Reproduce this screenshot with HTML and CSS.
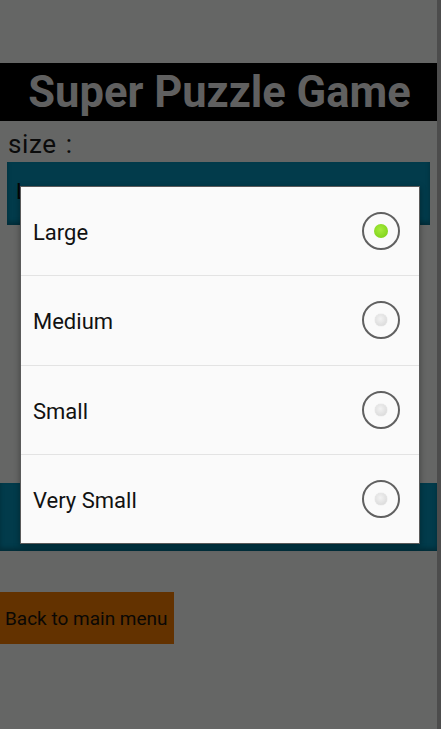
FILE: index.html
```html
<!DOCTYPE html>
<html lang="en">
<head>
    <meta charset="UTF-8">
    <meta name="viewport" content="width=device-width, initial-scale=1.0">
    <title>Super Puzzle Game</title>
    <link rel="stylesheet" href="styles.css">
</head>
<body>
    <div class="screen">
        <div class="title-bar">Super Puzzle Game</div>
        <div class="size-label">size :</div>
        <div class="spinner"><span class="spinner-text">L</span></div>
        <div class="spacer"></div>
        <div class="start-box"></div>
        <button class="back-btn">Back to main menu</button>

        <div class="dialog">
            <div class="option">
                <span class="option-label">Large</span>
                <span class="radio checked"></span>
            </div>
            <div class="option">
                <span class="option-label">Medium</span>
                <span class="radio"></span>
            </div>
            <div class="option">
                <span class="option-label">Small</span>
                <span class="radio"></span>
            </div>
            <div class="option">
                <span class="option-label">Very Small</span>
                <span class="radio"></span>
            </div>
        </div>
    </div>
</body>
</html>
```

FILE: styles.css
```css
body {
    margin: 0;
    padding: 0;
    background-color: #4c4c4c;
    font-family: Roboto, "Noto Sans", sans-serif;
}
.screen {
    position: relative;
    width: 437px;
    height: 729px;
    background-color: #656665;
    padding-top: 63px;
    box-sizing: border-box;
}
.title-bar {
    background-color: #000;
    color: #606060;
    font-weight: bold;
    font-size: 43.5px;
    height: 58px;
    line-height: 60px;
    text-align: center;
    padding-left: 2px;
    white-space: nowrap;
}
.size-label {
    font-size: 26px;
    letter-spacing: 0.6px;
    word-spacing: 2px;
    color: #0b0b0b;
    padding-left: 8px;
    height: 41px;
    line-height: 46px;
}
.spinner {
    margin: 0 7px 0 7px;
    height: 63px;
    background-color: #023b4b;
    box-shadow: inset 0 -3px 4px rgba(0, 0, 0, 0.25);
    position: relative;
}
.spinner-text {
    position: absolute;
    left: 9px;
    top: 17px;
    font-size: 22px;
    color: #050505;
}
.spacer {
    height: 258px;
}
.start-box {
    height: 68px;
    background-color: #023b4b;
    box-shadow: inset 0 -3px 4px rgba(0, 0, 0, 0.25);
}
.back-btn {
    display: block;
    margin-top: 41px;
    width: 174px;
    height: 52px;
    border: none;
    padding: 0 0 0 5px;
    background-color: #633200;
    color: #0a0805;
    font-family: Roboto, "Noto Sans", sans-serif;
    font-size: 19px;
    text-align: left;
    white-space: nowrap;
}
.dialog {
    position: absolute;
    left: 20px;
    top: 186px;
    width: 400px;
    height: 358px;
    box-sizing: border-box;
    background-color: #fafafa;
    border: 1.5px solid #5a5a5a;
    box-shadow: 0 2px 6px rgba(0, 0, 0, 0.35);
    display: flex;
    flex-direction: column;
}
.option {
    flex: 1;
    display: flex;
    align-items: center;
    justify-content: space-between;
    padding: 0 19px 0 12px;
    font-size: 22px;
    color: #111;
    border-bottom: 1px solid #e3e3e3;
}
.option:last-child {
    border-bottom: none;
}
.option-label {
    padding-top: 3px;
}
.radio {
    width: 34px;
    height: 34px;
    border: 2px solid #606060;
    border-radius: 50%;
    display: flex;
    align-items: center;
    justify-content: center;
    box-sizing: content-box;
}
.radio::after {
    content: "";
    width: 12px;
    height: 12px;
    border-radius: 50%;
    background: radial-gradient(circle at 45% 40%, #f2f2f2, #d4d4d4);
    box-shadow: 0 0 1px rgba(0, 0, 0, 0.3);
}
.radio.checked::after {
    width: 14px;
    height: 14px;
    background: radial-gradient(circle at 45% 40%, #a6ec3c, #76cc12);
    box-shadow: none;
}
```
